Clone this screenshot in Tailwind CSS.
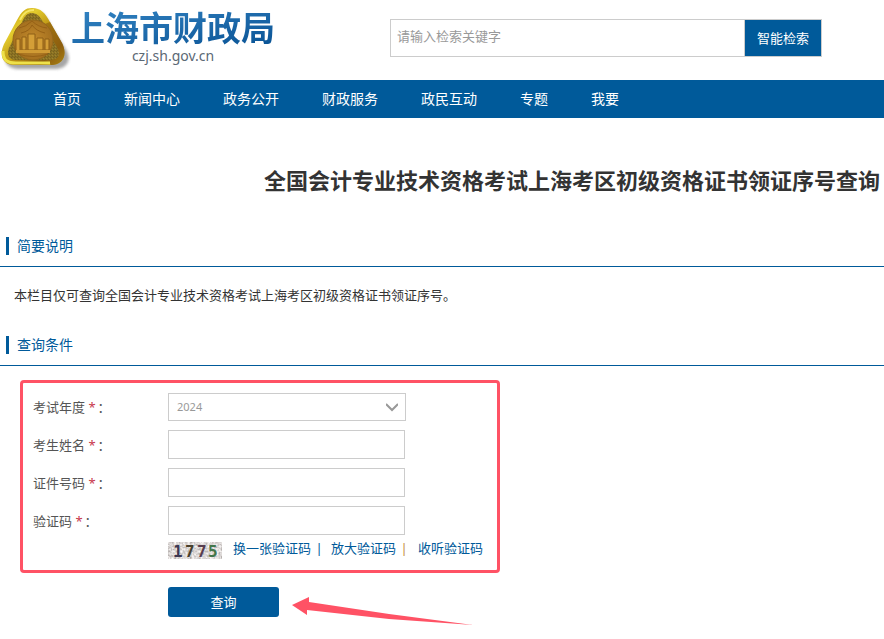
<!DOCTYPE html>
<html lang="zh-CN">
<head>
<meta charset="utf-8">
<meta name="viewport" content="width=device-width, initial-scale=1">
<title>上海市财政局</title>
<script src="https://cdn.jsdelivr.net/npm/@tailwindcss/browser@4"></script>
</head>
<body class="bg-white font-['Noto_Sans','Noto_Sans_CJK_SC',sans-serif] text-[13px] leading-5 text-[#333]">
<header class="flex h-20 items-start">
  <a href="#" class="flex w-[390px] shrink-0 items-start pt-2" aria-label="上海市财政局">
    <svg class="h-16 w-[71px] shrink-0" viewBox="0 0 71 64" fill="none" aria-hidden="true">
      <defs>
        <linearGradient id="gold" x1="0" y1="0" x2="1" y2="1">
          <stop offset="0" stop-color="#b98b0c"/><stop offset=".3" stop-color="#e3cb2c"/><stop offset=".55" stop-color="#b98f12"/><stop offset=".8" stop-color="#8a5d0c"/><stop offset="1" stop-color="#d9c01c"/>
        </linearGradient>
        <radialGradient id="disc"><stop offset="0" stop-color="#c48a2c"/><stop offset="1" stop-color="#a4701f"/></radialGradient>
        <pattern id="grain" width="3" height="3" patternUnits="userSpaceOnUse"><path fill="#8b7222" d="M0 0h3v3H0z"/><path fill="#776120" d="M0 0h1v1H0zM2 1h1v1H2z"/><path fill="#9c8330" d="M1 2h1v1H1z"/></pattern>
        <filter id="soft" x="-20%" y="-20%" width="140%" height="140%"><feGaussianBlur stdDeviation="1.5"/></filter>
      </defs>
      <path d="M34 2C41 2 45 9 49 17L63 39C71 51 65 60 53 60H17C4 60 0 51 6 40L21 12C25 4 28 2 34 2Z" fill="#777" opacity=".65" filter="url(#soft)" transform="translate(2 1)"/>
      <path d="M32 0C41 0 45 5 50 14L62 35C68 47 63 57 51 57H15C2 57-1 47 4 36L17 12C22 3 25 0 32 0Z" fill="url(#gold)"/>
      <path d="M50 14 62 35C68 47 63 57 51 57L48 50C59 48 57 41 53 35L42 17Z" fill="#8f5f10" opacity=".65"/>
      <path d="M32 5C38 5 41 10 44 16L57 39C62 48 57 52 50 52H16C8 52 6 45 10 38L22 14C25 7 28 5 32 5Z" fill="url(#grain)"/>
      <circle cx="33" cy="32" r="20" fill="url(#disc)" stroke="#95671b"/>
      <path d="M19 20Q26 19 32 13Q38 19 47 20M21 25Q30 23 32 17Q36 23 45 25M18 46Q33 51 48 46" stroke="#966116"/>
      <path d="M16 31h4v12h-4zM22 29h4v13h-4zM28 26h7v16h-7zM37 30h6v12h-6zM45 31h4v11h-4z" fill="#d49e37" stroke="#8d5e16"/>
      <path d="M16 42h34v3H16z" fill="#d09b34"/>
      <path d="M3 43C3 53 8 55 16 55H50" stroke="#eee14a" stroke-width="3"/>
      <path d="M20 12C24 4 28 2 34 2" stroke="#f5e563" stroke-width="2"/>
    </svg>
    <span class="flex flex-col items-center">
      <span class="bg-linear-to-br from-[#3385c4] to-[#075294] bg-clip-text text-[34px] leading-10 font-bold text-transparent">上海市财政局</span>
      <span class="text-sm leading-4 text-[#5b6874]">czj.sh.gov.cn</span>
    </span>
  </a>
  <form class="mt-[19px] mr-4 flex h-[38px] max-w-[432px] flex-1" role="search">
    <input type="search" aria-label="检索关键字" placeholder="请输入检索关键字" class="min-w-0 flex-1 border border-[#ccc] px-1.5 pb-1 text-[13px] outline-none placeholder:text-[#999]">
    <button type="button" class="w-[77px] shrink-0 border border-l-0 border-[#ccc] bg-[#005a9a] text-[13px] text-white">智能检索</button>
  </form>
</header>
<nav class="flex h-[38px] items-center gap-[43px] bg-[#005a9a] pl-[53px] text-sm whitespace-nowrap text-white">
  <a href="#">首页</a><a href="#">新闻中心</a><a href="#">政务公开</a><a href="#">财政服务</a><a href="#">政民互动</a><a href="#">专题</a><a href="#">我要</a>
</nav>
<main>
  <h1 class="pt-[46px] pr-1 text-right text-[22px] leading-8 font-bold whitespace-nowrap">全国会计专业技术资格考试上海考区初级资格证书领证序号查询</h1>
  <section class="pt-[30px]">
    <div class="flex h-[41px] items-center border-b border-[#005a9a] pl-1.5">
      <h2 class="border-l-3 border-[#005a9a] pl-2 text-sm leading-[18px] text-[#005a9a]">简要说明</h2>
    </div>
    <p class="pt-[18px] pb-5 pl-3.5">本栏目仅可查询全国会计专业技术资格考试上海考区初级资格证书领证序号。</p>
  </section>
  <section>
    <div class="flex h-[41px] items-center border-b border-[#005a9a] pl-1.5">
      <h2 class="border-l-3 border-[#005a9a] pl-2 text-sm leading-[18px] text-[#005a9a]">查询条件</h2>
    </div>
    <form class="pt-3.5 pl-5">
      <div class="w-[480px] rounded-sm border-3 border-[#ff5265] py-2.5 pl-2.5 text-[#555]">
        <div class="grid grid-cols-[135px_1fr] items-center gap-y-[9px]">
          <label for="year">考试年度 <span class="mr-0.5 text-[#c7364b]">*</span>：</label>
          <div class="relative w-[238px]">
            <select id="year" class="block h-7 w-full appearance-none border border-[#ccc] bg-white px-2 text-[11px] text-[#999]"><option>2024</option></select>
            <svg class="pointer-events-none absolute top-2 right-2 h-3 w-3" viewBox="0 0 12 12" fill="none" stroke="#999" stroke-width="2" aria-hidden="true"><path d="m0 3 6 6 6-6"/></svg>
          </div>
          <label for="name">考生姓名 <span class="mr-0.5 text-[#c7364b]">*</span>：</label>
          <input id="name" type="text" class="h-[29px] w-[237px] border border-[#ccc] px-2">
          <label for="idno">证件号码 <span class="mr-0.5 text-[#c7364b]">*</span>：</label>
          <input id="idno" type="text" class="h-[29px] w-[237px] border border-[#ccc] px-2">
          <label for="code">验证码 <span class="mr-0.5 text-[#c7364b]">*</span>：</label>
          <input id="code" type="text" class="h-[29px] w-[237px] border border-[#ccc] px-2">
        </div>
        <div class="flex items-start pt-[3px] pb-px pl-[135px] whitespace-nowrap text-[#005a9a]">
          <svg class="mt-1 mr-[11px] h-[17px] w-[54px] shrink-0 overflow-visible" viewBox="0 0 54 17" role="img" aria-label="验证码 1775">
            <defs><filter id="noise" x="0" y="0" width="100%" height="100%"><feTurbulence type="fractalNoise" baseFrequency=".45" numOctaves="2" seed="4"/><feColorMatrix values=".9 0 0 0 .27  .9 0 0 0 .24  .9 0 0 0 .23  0 0 0 0 1"/></filter></defs>
            <rect width="54" height="17" filter="url(#noise)"/>
            <g font-family="DejaVu Sans Mono" font-size="16" font-weight="bold"><text x="5" y="15" fill="#3d3853">1</text><text x="17" y="15" fill="#48402d">7</text><text x="29" y="15" fill="#583e50">7</text><text x="40" y="15" fill="#43764a">5</text></g>
          </svg>
          <a href="#">换一张验证码</a><span class="w-4 text-center">|</span><a href="#" class="pl-1">放大验证码</a><span class="w-4 text-center text-[#c58b42]">|</span><a href="#" class="pl-1.5">收听验证码</a>
        </div>
      </div>
      <div class="flex items-start pt-3.5 pl-[148px]">
        <button type="button" class="h-[30px] w-[111px] rounded-[3px] bg-[#005a9a] text-[13px] text-white">查询</button>
        <svg class="mt-[9px] ml-[13px] h-[30px] w-[181px]" viewBox="0 0 181 30" fill="#ff5265" aria-hidden="true"><path d="m0 9 17-8v5L97 18 181 29 97 23 15 14v5Z"/></svg>
      </div>
    </form>
  </section>
</main>
</body>
</html>
